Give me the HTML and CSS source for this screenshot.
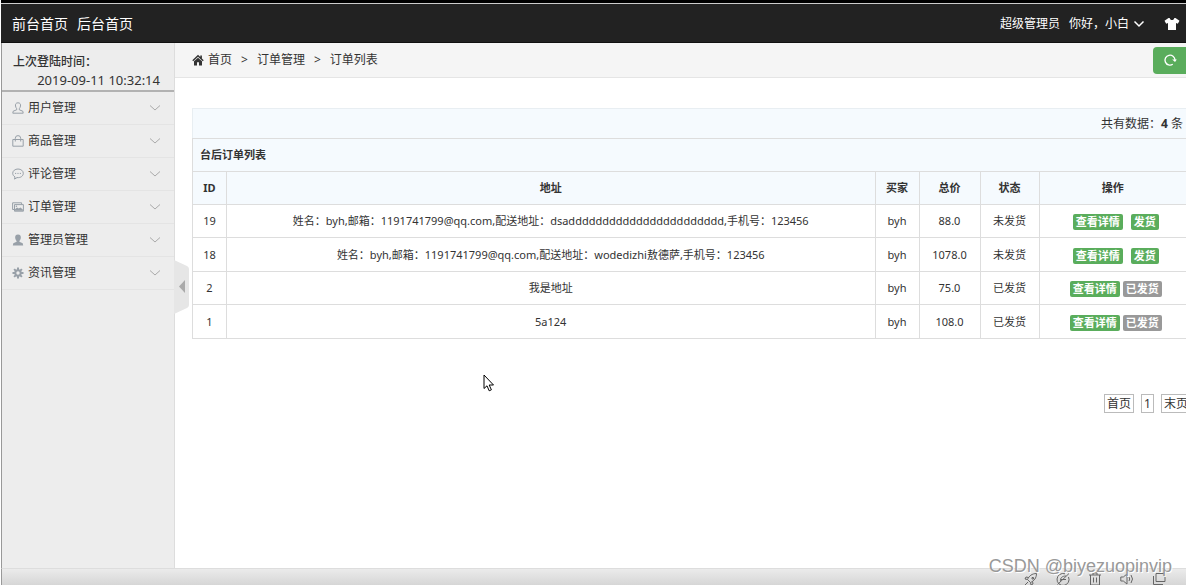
FILE: index.html
```html
<!DOCTYPE html>
<html lang="zh-CN">
<head>
<meta charset="utf-8">
<meta name="viewport" content="width=device-width, initial-scale=1">
<title>订单列表</title>
<link rel="stylesheet" href="styles.css">
</head>
<body>
<div class="app">
  <header class="topbar">
    <nav class="topnav"><a href="#">前台首页</a><a href="#">后台首页</a></nav>
    <div class="userbar">
      <span class="role">超级管理员</span>
      <button class="user" type="button">你好，小白
        <svg class="chev" viewBox="0 0 12 12"><path d="M1.5 3.5 6 8l4.500-4.500"/></svg>
      </button>
      <button class="skin" type="button" aria-label="换肤">
        <svg viewBox="0 0 16 14"><path d="M4.500 1 0.500 3.800l1.700 3 1.800-.8V13h8V6l1.800.8 1.700-3L11.500 1h-1.200C10 3.800 6 3.800 5.700 1z"/></svg>
      </button>
    </div>
  </header>

  <div class="body">
    <aside class="sidebar">
      <div class="last-login"><b>上次登陆时间：</b><time>2019-09-11 10:32:14</time></div>
      <nav class="menu">
        <button type="button"><svg class="icon line" viewBox="0 0 12 12"><path d="M6 .8C3.900.8 3.200 2.300 3.500 4c.2 1.300.8 2.100 1.200 2.700v1.100L1.200 9.200.8 11.200h10.400l-.4-2-3.500-1.400V6.700C7.700 6.100 8.300 5.300 8.500 4 8.800 2.300 8.100.8 6 .8z"/></svg><span>用户管理</span><svg class="chev" viewBox="0 0 12 12"><path d="M1 3.500 6 8l5-4.500"/></svg></button>
        <button type="button"><svg class="icon line" viewBox="0 0 12 12"><path d="M.8 4.500h10.400v6.700H.8zM3.300 6.500V3.300a2.700 2.700 0 0 1 5.400 0v3.200"/></svg><span>商品管理</span><svg class="chev" viewBox="0 0 12 12"><path d="M1 3.500 6 8l5-4.500"/></svg></button>
        <button type="button"><svg class="icon line" viewBox="0 0 12 12"><path d="M6 1C3 1 .7 2.900.7 5.300c0 1.500.9 2.800 2.300 3.600l-.5 2.200L5 9.600c4 .4 6.300-1.900 6.300-4.300S9 1 6 1zM3 5.400h1.200M5.400 5.400h1.200M7.800 5.400H9"/></svg><span>评论管理</span><svg class="chev" viewBox="0 0 12 12"><path d="M1 3.500 6 8l5-4.500"/></svg></button>
        <button type="button"><svg class="icon line" viewBox="0 0 12 12"><path d="M2 8.500H.6V1.800h9v1.500M2.500 3.600h8.900v6.600H2.500z"/><path class="solid" d="M3 9.800V8.200l2-1.800 1.800 1.200L8.500 6.500 11 8.700v1.100zM3.600 5.200a.8.8 0 1 0 1.600 0 .8.8 0 1 0-1.600 0z"/></svg><span>订单管理</span><svg class="chev" viewBox="0 0 12 12"><path d="M1 3.500 6 8l5-4.500"/></svg></button>
        <button type="button"><svg class="icon fill" viewBox="0 0 12 12"><path d="M6 .5C3.700.500 2.900 2.200 3.200 4c.2 1.500.9 2.400 1.400 2.900v.9L1.300 9.200.8 11.500h10.400l-.5-2.300-3.300-1.400v-.9C7.900 6.400 8.600 5.500 8.800 4 9.100 2.200 8.300.5 6 .5z"/></svg><span>管理员管理</span><svg class="chev" viewBox="0 0 12 12"><path d="M1 3.500 6 8l5-4.500"/></svg></button>
        <button type="button"><svg class="icon gear" viewBox="0 0 12 12"><circle cx="6" cy="6" r="2.700"/><path d="M6 .5V3M6 9v2.500M.5 6H3M9 6h2.500M2.100 2.100l1.800 1.800M8.100 8.100l1.800 1.800M2.100 9.900l1.800-1.800M8.100 3.900l1.800-1.800"/></svg><span>资讯管理</span><svg class="chev" viewBox="0 0 12 12"><path d="M1 3.500 6 8l5-4.500"/></svg></button>
      </nav>
      <button class="collapse" type="button" aria-label="收起菜单"><svg viewBox="0 0 15 54"><path class="tab" d="M0 0 13 6q2 1 2 3v36q0 2-2 3L0 54z"/><path class="arrow" d="M11 20v13L5 26.500z"/></svg></button>
    </aside>

    <main class="content">
      <nav class="crumbs">
        <svg class="home" viewBox="0 0 12 12"><path d="M6 .8.300 6.300l.9.900L6 2.800l4.800 4.400.9-.9L9.900 4.500V1.500H8.300V3zM2 7.300V11.500h3V8.300h2v3.200h3V7.300L6 3.800z"/></svg>
        <a href="#">首页</a><span>&gt;</span><a href="#">订单管理</a><span>&gt;</span><a href="#">订单列表</a>
        <button class="refresh" type="button" aria-label="刷新"><svg viewBox="0 0 14 14"><path d="M9.800 11.300A5 5 0 1 1 12 7"/><path class="tip" d="M9.200 6.500h4.600L12 9z"/></svg></button>
      </nav>
      <div class="page">
        <div class="count">共有数据：<b>4</b> 条</div>
        <table class="orders">
          <colgroup><col class="c-id"><col><col class="c-buyer"><col class="c-price"><col class="c-state"><col class="c-ops"></colgroup>
          <thead>
            <tr><th class="title" colspan="6">台后订单列表</th></tr>
            <tr><th>ID</th><th>地址</th><th>买家</th><th>总价</th><th>状态</th><th>操作</th></tr>
          </thead>
          <tbody>
            <tr><td>19</td><td>姓名：byh,邮箱：1191741799@qq.com,配送地址：dsaddddddddddddddddddddddd,手机号：123456</td><td>byh</td><td>88.0</td><td>未发货</td><td><div class="ops wide"><a class="tag" href="#">查看详情</a><a class="tag" href="#">发货</a></div></td></tr>
            <tr><td>18</td><td>姓名：byh,邮箱：1191741799@qq.com,配送地址：wodedizhi敖德萨,手机号：123456</td><td>byh</td><td>1078.0</td><td>未发货</td><td><div class="ops wide"><a class="tag" href="#">查看详情</a><a class="tag" href="#">发货</a></div></td></tr>
            <tr><td>2</td><td>我是地址</td><td>byh</td><td>75.0</td><td>已发货</td><td><div class="ops"><a class="tag" href="#">查看详情</a><span class="tag done">已发货</span></div></td></tr>
            <tr><td>1</td><td>5a124</td><td>byh</td><td>108.0</td><td>已发货</td><td><div class="ops"><a class="tag" href="#">查看详情</a><span class="tag done">已发货</span></div></td></tr>
          </tbody>
        </table>
        <nav class="pager"><a href="#">首页</a><a href="#">1</a><a href="#">末页</a></nav>
      </div>
    </main>
  </div>

  <footer class="statusbar">
    <svg viewBox="0 0 14 14"><path d="M5 9 3.500 7.500C5 4 8 1.500 12.500 1.500 12.500 6 10 9 6.500 10.500zM4.500 5.500 2 5l-1 2 2.500.5M8.500 9.500 9 12l-2 1-.5-2.500M4 10l-3 3M8 5.500h1.500V7H8z"/></svg>
    <svg viewBox="0 0 14 14"><path d="M12.500 5A6 6 0 1 1 9 1.800M1.500 12.500 13 1.500M4.500 9.500C4 6 6 4 10 4M5 7.500h5"/></svg>
    <svg viewBox="0 0 14 14"><path d="M1 3h12M5 3V1h4v2M2.500 3v10h9V3M5.500 5.500v5M8.500 5.500v5"/></svg>
    <svg viewBox="0 0 14 14"><path d="M.8 5h2.500L7 2v10L3.300 9H.8zM9 5q1.500 2 0 4M11 3q3 4 0 8"/></svg>
    <svg viewBox="0 0 14 14"><path d="M4 1.500h9v8H4zM1.500 4v8.500H11"/></svg>
  </footer>
  <div class="watermark">CSDN @biyezuopinvip</div>
  <svg class="pointer" viewBox="0 0 12 18"><path d="M1 1v13.500l3-2.700 2.200 5 2.200-1-2.200-4.800H10.500z"/></svg>
</div>
</body>
</html>
```
FILE: styles.css
```css
* { box-sizing: border-box; }

body {
  margin: 0;
  background: #fff;
  color: #333;
  font: 12px/18px "Noto Sans", "Noto Sans CJK SC", sans-serif;
}

a { color: inherit; text-decoration: none; }
button { border: 0; padding: 0; background: none; color: inherit; font: inherit; text-align: left; }
svg { display: block; fill: none; stroke: currentColor; }

.app {
  position: relative;
  display: flex;
  flex-direction: column;
  min-height: 100vh;
  overflow: hidden;
  border-left: 1px solid #fff;
}

.topbar {
  display: flex;
  align-items: center;
  justify-content: space-between;
  height: 43px;
  padding: 6px 6px 0 11px;
  border-bottom: 1px solid #111;
  background: linear-gradient(#000 3px, #ccc 3px, #ccc 4px, #222 4px);
  color: #fff;
}
.topnav { display: flex; gap: 9px; font-size: 14px; }
.userbar { display: flex; align-items: center; gap: 9px; }
.user { display: flex; align-items: center; gap: 4px; }
.userbar .chev { width: 12px; height: 12px; stroke-width: 1.5; }
.skin { margin-left: 10px; }
.skin svg { width: 16px; height: 14px; fill: #fff; stroke: none; }

.body { display: flex; flex: 1; }

.sidebar {
  position: relative;
  flex: none;
  width: 174px;
  border-left: 1px solid #999;
  border-right: 1px solid #ddd;
  background: #ededed;
}
.last-login {
  display: flex;
  flex-direction: column;
  padding: 10px 14px 0 11px;
  border-bottom: 2px solid #b2b2b2;
}
.last-login time { align-self: flex-end; font-size: 13px; line-height: 19px; }
.last-login b { font-weight: 500; }
.menu button {
  display: flex;
  align-items: center;
  gap: 4px;
  width: 100%;
  height: 33px;
  padding: 0 13px 0 10px;
  border-bottom: 1px solid #e4e4e4;
}
.menu span { flex: 1; }
.menu svg { flex: none; width: 12px; height: 12px; }
.menu .icon { color: #98a0a8; }
.menu .fill, .menu .solid { fill: currentColor; stroke: none; }
.menu .gear { stroke-width: 2; }
.menu .chev { color: #aaa; }

.collapse { position: absolute; top: 217px; left: 100%; }
.collapse svg { width: 15px; height: 54px; stroke: none; }
.collapse .tab { fill: #e6e6e6; }
.collapse .arrow { fill: #aaa; }

.content { flex: 1; min-width: 0; }
.crumbs {
  display: flex;
  align-items: center;
  gap: 9px;
  height: 35px;
  padding-left: 17px;
  border-bottom: 1px solid #e5e5e5;
  background: #f5f5f5;
}
.home { width: 12px; height: 12px; margin-right: -5px; fill: #333; stroke: none; }
.refresh {
  display: flex;
  align-items: center;
  width: 33px;
  height: 27px;
  margin-left: auto;
  padding-left: 10px;
  border-radius: 4px 0 0 4px;
  background: #5aad5c;
  color: #fff;
}
.refresh svg { width: 14px; height: 14px; stroke-width: 1.3; }
.refresh .tip { fill: #fff; stroke: none; }

.page { padding: 30px 0 0 17px; }
.count {
  height: 30px;
  padding: 0 3px;
  border: 1px solid #e8eef2;
  border-width: 1px 0 0 1px;
  background: #f5fafe;
  line-height: 30px;
  text-align: right;
}

.orders {
  width: 100%;
  border-collapse: collapse;
  table-layout: fixed;
  font-size: 11px;
  text-align: center;
}
.orders tr { height: 33px; }
.orders tbody tr:nth-child(even) { height: 34px; }
.orders th, .orders td { padding: 0; border: 1px solid #ddd; }
.orders tr > :last-child { border-right: 0; }
.orders th { background: #f5fafe; }
.orders .title { padding-left: 7px; text-align: left; }
.c-id { width: 34px; }
.c-buyer { width: 44px; }
.c-price { width: 61px; }
.c-state { width: 59px; }
.c-ops { width: 147px; }

.ops { display: flex; justify-content: center; gap: 3px; padding: 2px 0 0 6px; }
.ops.wide { gap: 8px; }
.tag {
  padding: 0 3px;
  border-radius: 2px;
  background: #5aad5c;
  color: #fff;
  font-weight: 700;
  line-height: 16px;
}
.tag.done { background: #999; }

.pager { display: flex; justify-content: flex-end; gap: 7px; margin: 55px -5px 0 0; }
.pager a { padding: 0 2px; border: 1px solid #bbb; line-height: 17px; }

.statusbar {
  display: flex;
  justify-content: flex-end;
  gap: 18px;
  height: 17px;
  padding: 3px 20px 0 0;
  border-top: 1px solid #ddd;
  border-left: 1px solid #999;
  background: linear-gradient(#ebebeb, #d6d6d6);
  color: #666;
}
.statusbar svg { flex: none; width: 14px; height: 14px; }

.watermark {
  position: absolute;
  right: 14px;
  bottom: 7px;
  color: #999;
  font: 18px/24px "Liberation Sans", Arial, sans-serif;
  text-shadow: 1px 1px 0 #fff;
}
.pointer {
  position: absolute;
  top: 374px;
  left: 482px;
  width: 12px;
  height: 18px;
  fill: #fff;
  stroke: #000;
}
```
